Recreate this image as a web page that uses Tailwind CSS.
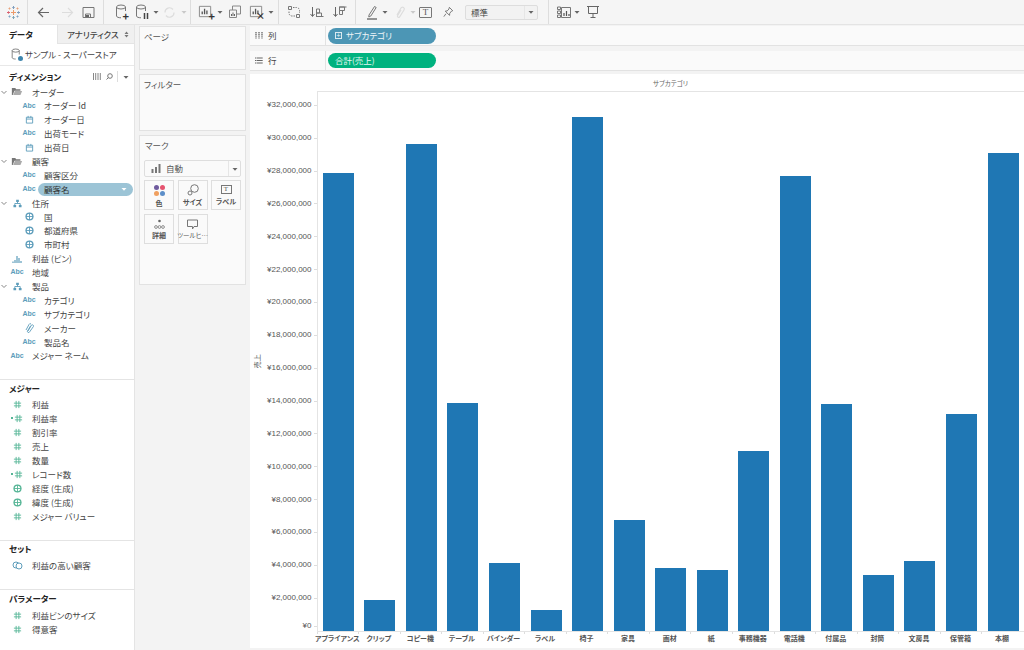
<!DOCTYPE html>
<html lang="ja">
<head>
  <meta charset="UTF-8">
  <title>Tableau - 売上</title>
  <script src="https://cdn.jsdelivr.net/npm/@tailwindcss/browser@4"></script>
</head>
<body class="w-[1024px] h-[650px] overflow-hidden bg-[#f3f3f3] text-[#444] text-[8.5px] [font-feature-settings:'palt'] font-['Noto_Sans_CJK_JP','Liberation_Sans',sans-serif]">
  <svg class="hidden">
    <symbol id="date" viewBox="0 0 10 10"><path d="M1.5 2.5h7v6.500h-7zM1.500 4.500h7M3.500 1v2M6.500 1v2" fill="none" stroke="#5d9dbb"/></symbol>
    <symbol id="globe" viewBox="0 0 10 10"><circle cx="5" cy="5" r="3.800" fill="none" stroke="#5d9dbb" stroke-width="1.500"/><path d="M1 5h8M5 1v8" stroke="#5d9dbb"/></symbol>
    <symbol id="globeg" viewBox="0 0 10 10"><circle cx="5" cy="5" r="3.800" fill="none" stroke="#56b596" stroke-width="1.500"/><path d="M1 5h8M5 1v8" stroke="#56b596"/></symbol>
    <symbol id="hash" viewBox="0 0 10 10"><path d="M3.500 1v8M6.500 1v8M1 3.500h8M1 6.500h8" fill="none" stroke="#56b596"/></symbol>
    <symbol id="folder" viewBox="0 0 14 10"><path d="M1 1h4l1 1.500h5V4H4L2 9H1z" fill="#777"/><path d="M4.500 4.500H13L11 9H2.500z" fill="#aaa"/></symbol>
    <symbol id="tree" viewBox="0 0 10 10"><path d="M3.500.8h3v2.400h-3zM.5 6.800h3v2.400h-3zM6.500 6.800h3v2.400h-3z" fill="#5d9dbb"/><path d="M5 3v2M2 7V5h6v2" fill="none" stroke="#5d9dbb"/></symbol>
    <symbol id="chev" viewBox="0 0 8 8"><path d="M1.500 3l2.500 2.500L6.500 3" fill="none" stroke="#888"/></symbol>
    <symbol id="caret" viewBox="0 0 6 6"><path d="M.5 2h5L3 4.800z" fill="#666"/></symbol>
    <symbol id="cyl" viewBox="0 0 14 16"><ellipse cx="6" cy="3" rx="4.500" ry="2" fill="none" stroke="#777"/><path d="M1.500 3v9c0 1 2 1.800 4.500 1.800M10.500 3v4" fill="none" stroke="#777"/></symbol>
    <symbol id="sheet" viewBox="0 0 16 16"><path d="M1.500 2.500h12v11h-12z" fill="none" stroke="#888"/><path d="M4.500 11V8M7 11V5M9.500 11V7" stroke="#555" stroke-width="1.400"/></symbol>
  </svg>

  <!-- toolbar -->
  <div class="h-[25px] flex items-center border-b border-[#e4e4e4] bg-[#f5f5f5]">
    <div class="w-[28px] h-full flex items-center justify-center border-r border-[#ddd]">
      <svg class="w-[13px] h-[13px]" viewBox="0 0 13 13"><path d="M6.500 4v5M4 6.500h5" stroke="#eb9a6a"/><path d="M6.500 0v3M5.300 1.500h2.400" stroke="#7d9cbc"/><path d="M6.500 10v3M5.300 11.500h2.400" stroke="#7aa3b5"/><path d="M0 6.500h3M1.500 5.300v2.400" stroke="#d9606f"/><path d="M10 6.500h3M11.500 5.300v2.400" stroke="#7d9cbc"/><path d="M2.500 1.500v2M1.500 2.500h2M10.500 1.500v2M9.500 2.500h2" stroke="#e8a27a"/><path d="M2.500 9.500v2M1.500 10.500h2M10.500 9.500v2M9.500 10.500h2" stroke="#7fa3c4"/></svg>
    </div>
    <div class="w-[76px] h-full flex items-center border-r border-[#ddd]">
      <svg class="ml-[9px] w-[13px] h-[13px]" viewBox="0 0 13 13"><path d="M12 6.500H1.500M6 2L1.500 6.500 6 11" fill="none" stroke="#666" stroke-width="1.200"/></svg>
      <svg class="ml-[11px] w-[13px] h-[13px]" viewBox="0 0 13 13"><path d="M1 6.500h10.500M7 2l4.500 4.500L7 11" fill="none" stroke="#ddd" stroke-width="1.200"/></svg>
      <svg class="ml-[8px] w-[13px] h-[13px]" viewBox="0 0 13 13"><path d="M1 1.500h11v10H1zM3.500 11.500V8h5v3.500" fill="none" stroke="#777"/><path d="M4 9h3v2H4z" fill="#666"/></svg>
    </div>
    <div class="w-[87px] h-full flex items-center border-r border-[#ddd]">
      <div class="relative ml-[11px] w-[14px] h-[16px]"><svg class="w-[14px] h-[16px]"><use href="#cyl"/></svg><span class="absolute right-0 bottom-0 text-[11px] leading-[8px] font-bold text-[#333]">+</span></div>
      <div class="relative ml-[6px] w-[14px] h-[16px]"><svg class="w-[14px] h-[16px]"><use href="#cyl"/></svg><svg class="absolute right-0 bottom-[1px] w-[6px] h-[6px]" viewBox="0 0 6 6"><path d="M1.500 0v6M4.500 0v6" stroke="#444" stroke-width="1.500"/></svg></div>
      <svg class="ml-[4px] w-[6px] h-[6px]"><use href="#caret"/></svg>
      <svg class="ml-[4px] w-[13px] h-[13px]" viewBox="0 0 13 13"><path d="M2 6.500a4.500 4.500 0 018-3M11 6.500a4.500 4.500 0 01-8 3" fill="none" stroke="#ddd" stroke-width="1.200"/></svg>
      <svg class="ml-[5px] w-[6px] h-[6px] opacity-30"><use href="#caret"/></svg>
    </div>
    <div class="w-[88px] h-full flex items-center border-r border-[#ddd]">
      <div class="relative ml-[7px] w-[15px] h-[16px]"><svg class="w-[15px] h-[15px]"><use href="#sheet"/></svg><span class="absolute -right-[2px] bottom-0 text-[11px] leading-[8px] font-bold text-[#333]">+</span></div>
      <svg class="ml-[4px] w-[6px] h-[6px]"><use href="#caret"/></svg>
      <svg class="ml-[5px] w-[14px] h-[14px]" viewBox="0 0 14 14"><path d="M4.500 1h8v8h-8z" fill="none" stroke="#888"/><path d="M1.500 5h7v7.500h-7z" fill="#f5f5f5" stroke="#888"/><path d="M3.500 11V9M5 11V7.500M6.500 11V9" stroke="#666"/></svg>
      <div class="relative ml-[7px] w-[15px] h-[16px]"><svg class="w-[15px] h-[15px]"><use href="#sheet"/></svg><span class="absolute -right-[1px] bottom-[1px] text-[9px] leading-[7px] font-bold text-[#333]">×</span></div>
      <svg class="ml-[4px] w-[6px] h-[6px]"><use href="#caret"/></svg>
    </div>
    <div class="w-[77px] h-full flex items-center border-r border-[#ddd]">
      <svg class="ml-[8px] w-[14px] h-[14px]" viewBox="0 0 14 14"><path d="M1.500 1.500h3v3h-3zM9.500 9.500h3v3h-3z" fill="none" stroke="#777"/><path d="M6 2.500h3.500a3 3 0 013 3V8M8 11H5a3 3 0 01-3-3V6" fill="none" stroke="#777" stroke-dasharray="1.500 1"/></svg>
      <svg class="ml-[9px] w-[14px] h-[14px]" viewBox="0 0 14 14"><path d="M2.500 2v9M.5 9l2 2.500L4.500 9" fill="none" stroke="#666"/><path d="M6 11.500h7.500M6.500 8h5v3.500h-5zM6.500 4h3v4h-3z" fill="none" stroke="#777"/></svg>
      <svg class="ml-[9px] w-[14px] h-[14px]" viewBox="0 0 14 14"><path d="M2.500 2v9M.5 9l2 2.500L4.500 9" fill="none" stroke="#666"/><path d="M6 2h7.500M6.500 2v3.500h5V2zM6.500 5.500v4h3v-4z" fill="none" stroke="#777"/></svg>
    </div>
    <div class="w-[193px] h-full flex items-center border-r border-[#ddd]">
      <svg class="ml-[9px] w-[14px] h-[15px]" viewBox="0 0 14 15"><path d="M4 10l5.500-8.500 1.700 1L5.800 11l-2 1z" fill="none" stroke="#777"/><path d="M2 14h10" stroke="#555" stroke-width="1.200"/></svg>
      <svg class="ml-[3px] w-[6px] h-[6px]"><use href="#caret"/></svg>
      <svg class="ml-[5px] w-[13px] h-[15px]" viewBox="0 0 13 15"><path d="M4 10l4-7a1.800 1.800 0 013 2L6.500 12a1.200 1.200 0 01-2-1.200L8 5" fill="none" stroke="#ddd" stroke-width="1.200"/></svg>
      <svg class="ml-[4px] w-[6px] h-[6px] opacity-30"><use href="#caret"/></svg>
      <span class="ml-[3px] w-[13px] h-[11px] border border-[#777] rounded-[1px] flex items-center justify-center font-['Liberation_Serif',serif] text-[9px] leading-none text-[#555]">T</span>
      <svg class="ml-[11px] w-[11px] h-[12px]" viewBox="0 0 13 13"><path d="M7.500 1l4 4-1.500.5-2 2.500-.3 2.500-5-5L5 5.200 7 3z" fill="none" stroke="#666"/><path d="M3.500 8.500L1 12" stroke="#666"/></svg>
      <div class="ml-[11px] w-[73px] h-[15px] flex items-center border border-[#ddd] rounded-[2px] bg-[#f2f2f2]">
        <span class="flex-1 pl-[5px] leading-none text-[#444]">標準</span>
        <span class="w-[13px] h-full flex items-center justify-center border-l border-[#e6e6e6]"><svg class="w-[6px] h-[6px]"><use href="#caret"/></svg></span>
      </div>
    </div>
    <div class="flex items-center h-full">
      <svg class="ml-[8px] w-[14px] h-[13px]" viewBox="0 0 14 13"><path d="M.5 1h3v2.500h-3zM.5 5h3v2.500h-3zM.5 9h3v2.500h-3zM4.500 1.500h9v10h-9z" fill="none" stroke="#777"/><path d="M7 10V7M9.500 10V5M12 10V8" stroke="#555" stroke-width="1.200"/></svg>
      <svg class="ml-[3px] w-[6px] h-[6px]"><use href="#caret"/></svg>
      <svg class="ml-[6px] w-[14px] h-[14px]" viewBox="0 0 14 14"><path d="M1 1.500h12M2.500 1.500v7h9v-7M7 8.500v4M4.500 12.500h5" fill="none" stroke="#666"/></svg>
    </div>
  </div>

  <div class="flex h-[625px]">
    <!-- data pane -->
    <div class="w-[135px] shrink-0 bg-white border-r border-[#e4e4e4]">
      <div class="h-[19px] flex">
        <div class="w-[57px] flex items-center pl-[9px] font-bold text-[#222]">データ</div>
        <div class="flex-1 flex items-center pl-[9px] bg-[#f0f0f0] border-b border-[#e4e4e4] border-l whitespace-nowrap"><span class="font-medium">アナリティクス</span><svg class="ml-auto mr-[5px] w-[5px] h-[7px]" viewBox="0 0 5 7"><path d="M.5 3l2-2.500 2 2.500zM.5 4l2 2.500 2-2.500z" fill="#777"/></svg></div>
      </div>
      <div class="h-[22px] flex items-center border-b border-[#e8e8e8] pl-[11px]">
        <div class="relative w-[11px] h-[13px]"><svg class="w-[11px] h-[13px]" viewBox="0 0 14 16"><ellipse cx="6" cy="3" rx="4.500" ry="2" fill="none" stroke="#666"/><path d="M1.500 3v9c0 1 2 1.800 4.500 1.800M10.500 3v5" fill="none" stroke="#666"/></svg><span class="absolute -right-[1px] bottom-0 w-[5px] h-[5px] rounded-full bg-[#3f86ad]"></span></div>
        <span class="ml-[3px]">サンプル - スーパーストア</span>
      </div>
      <div class="h-[17px] mt-[2px] flex items-center pl-[9px] pr-[5px]">
        <span class="font-bold text-[#222]">ディメンション</span>
        <svg class="ml-auto w-[8px] h-[7px]" viewBox="0 0 8 7"><path d="M.5 0v7M2.700 0v7M5 0v7M7.300 0v7" stroke="#888"/></svg>
        <svg class="ml-[5px] w-[7px] h-[7px]" viewBox="0 0 7 7"><circle cx="4" cy="3" r="2.300" fill="none" stroke="#777"/><path d="M2.500 4.500L.5 6.500" stroke="#777"/></svg>
        <span class="ml-[4px] w-px h-[11px] bg-[#ddd]"></span>
        <svg class="ml-[5px] w-[6px] h-[6px]"><use href="#caret"/></svg>
      </div>
      <div class="h-[294px]">
        <div class="h-[13.9px] flex items-center"><svg class="w-[8px] h-[8px]"><use href="#chev"/></svg><span class="w-[18px] flex justify-center"><svg class="w-[12px] h-[9px]"><use href="#folder"/></svg></span><span class="ml-[6px]">オーダー</span></div>
        <div class="h-[13.9px] flex items-center pl-[20px]"><span class="w-[18px] text-center font-['Liberation_Sans',sans-serif] font-bold text-[7px] text-[#5d9dbb]">Abc</span><span class="ml-[6px]">オーダー Id</span></div>
        <div class="h-[13.9px] flex items-center pl-[20px]"><span class="w-[18px] flex justify-center"><svg class="w-[9px] h-[9px]"><use href="#date"/></svg></span><span class="ml-[6px]">オーダー日</span></div>
        <div class="h-[13.9px] flex items-center pl-[20px]"><span class="w-[18px] text-center font-['Liberation_Sans',sans-serif] font-bold text-[7px] text-[#5d9dbb]">Abc</span><span class="ml-[6px]">出荷モード</span></div>
        <div class="h-[13.9px] flex items-center pl-[20px]"><span class="w-[18px] flex justify-center"><svg class="w-[9px] h-[9px]"><use href="#date"/></svg></span><span class="ml-[6px]">出荷日</span></div>
        <div class="h-[13.9px] flex items-center"><svg class="w-[8px] h-[8px]"><use href="#chev"/></svg><span class="w-[18px] flex justify-center"><svg class="w-[12px] h-[9px]"><use href="#folder"/></svg></span><span class="ml-[6px]">顧客</span></div>
        <div class="h-[13.9px] flex items-center pl-[20px]"><span class="w-[18px] text-center font-['Liberation_Sans',sans-serif] font-bold text-[7px] text-[#5d9dbb]">Abc</span><span class="ml-[6px]">顧客区分</span></div>
        <div class="h-[13.9px] flex items-center pl-[20px]"><span class="w-[18px] text-center font-['Liberation_Sans',sans-serif] font-bold text-[7px] text-[#5d9dbb]">Abc</span><span class="flex-1 h-[13px] mr-[1px] flex items-center justify-between pl-[6px] pr-[6px] rounded-full bg-[#9cc4d6] text-[#333]">顧客名<svg class="w-[6px] h-[6px]" viewBox="0 0 6 6"><path d="M.5 2h5L3 4.800z" fill="#fff"/></svg></span></div>
        <div class="h-[13.9px] flex items-center"><svg class="w-[8px] h-[8px]"><use href="#chev"/></svg><span class="w-[18px] flex justify-center"><svg class="w-[9px] h-[9px]"><use href="#tree"/></svg></span><span class="ml-[6px]">住所</span></div>
        <div class="h-[13.9px] flex items-center pl-[20px]"><span class="w-[18px] flex justify-center"><svg class="w-[9px] h-[9px]"><use href="#globe"/></svg></span><span class="ml-[6px]">国</span></div>
        <div class="h-[13.9px] flex items-center pl-[20px]"><span class="w-[18px] flex justify-center"><svg class="w-[9px] h-[9px]"><use href="#globe"/></svg></span><span class="ml-[6px]">都道府県</span></div>
        <div class="h-[13.9px] flex items-center pl-[20px]"><span class="w-[18px] flex justify-center"><svg class="w-[9px] h-[9px]"><use href="#globe"/></svg></span><span class="ml-[6px]">市町村</span></div>
        <div class="h-[13.9px] flex items-center pl-[8px]"><span class="w-[18px] flex justify-center"><svg class="w-[11px] h-[8px]" viewBox="0 0 11 8"><path d="M1 8V6.500M3 8V5M5 8V1M7 8V3M9 8V6" stroke="#5d9dbb" stroke-width="1.200"/></svg></span><span class="ml-[6px]">利益 (ビン)</span></div>
        <div class="h-[13.9px] flex items-center pl-[8px]"><span class="w-[18px] text-center font-['Liberation_Sans',sans-serif] font-bold text-[7px] text-[#5d9dbb]">Abc</span><span class="ml-[6px]">地域</span></div>
        <div class="h-[13.9px] flex items-center"><svg class="w-[8px] h-[8px]"><use href="#chev"/></svg><span class="w-[18px] flex justify-center"><svg class="w-[9px] h-[9px]"><use href="#tree"/></svg></span><span class="ml-[6px]">製品</span></div>
        <div class="h-[13.9px] flex items-center pl-[20px]"><span class="w-[18px] text-center font-['Liberation_Sans',sans-serif] font-bold text-[7px] text-[#5d9dbb]">Abc</span><span class="ml-[6px]">カテゴリ</span></div>
        <div class="h-[13.9px] flex items-center pl-[20px]"><span class="w-[18px] text-center font-['Liberation_Sans',sans-serif] font-bold text-[7px] text-[#5d9dbb]">Abc</span><span class="ml-[6px]">サブカテゴリ</span></div>
        <div class="h-[13.9px] flex items-center pl-[20px]"><span class="w-[18px] flex justify-center"><svg class="w-[9px] h-[10px]" viewBox="0 0 9 10"><path d="M3 8l3.500-6a1.300 1.300 0 012 1.400L4.500 9a1 1 0 01-2-1L5.500 3M1 7l3-5.500A1.300 1.300 0 016 1" fill="none" stroke="#5d9dbb" stroke-width=".9"/></svg></span><span class="ml-[6px]">メーカー</span></div>
        <div class="h-[13.9px] flex items-center pl-[20px]"><span class="w-[18px] text-center font-['Liberation_Sans',sans-serif] font-bold text-[7px] text-[#5d9dbb]">Abc</span><span class="ml-[6px]">製品名</span></div>
        <div class="h-[13.9px] flex items-center pl-[8px]"><span class="w-[18px] text-center font-['Liberation_Sans',sans-serif] font-bold text-[7px] text-[#5d9dbb]">Abc</span><span class="ml-[6px]">メジャー ネーム</span></div>
      </div>
      <div class="h-[161px] border-t border-[#e4e4e4] pt-[1px]">
        <div class="h-[14px] mb-[2px] flex items-center pl-[9px] font-bold text-[#222]">メジャー</div>
        <div class="h-[14px] flex items-center pl-[8px]"><span class="w-[18px] flex justify-center"><svg class="w-[9px] h-[9px]"><use href="#hash"/></svg></span><span class="ml-[6px]">利益</span></div>
        <div class="h-[14px] flex items-center pl-[8px]"><span class="w-[18px] flex justify-center items-center"><span class="w-[2px] h-[2px] mr-[1px] bg-[#56b596]"></span><svg class="w-[9px] h-[9px]"><use href="#hash"/></svg></span><span class="ml-[6px]">利益率</span></div>
        <div class="h-[14px] flex items-center pl-[8px]"><span class="w-[18px] flex justify-center"><svg class="w-[9px] h-[9px]"><use href="#hash"/></svg></span><span class="ml-[6px]">割引率</span></div>
        <div class="h-[14px] flex items-center pl-[8px]"><span class="w-[18px] flex justify-center"><svg class="w-[9px] h-[9px]"><use href="#hash"/></svg></span><span class="ml-[6px]">売上</span></div>
        <div class="h-[14px] flex items-center pl-[8px]"><span class="w-[18px] flex justify-center"><svg class="w-[9px] h-[9px]"><use href="#hash"/></svg></span><span class="ml-[6px]">数量</span></div>
        <div class="h-[14px] flex items-center pl-[8px]"><span class="w-[18px] flex justify-center items-center"><span class="w-[2px] h-[2px] mr-[1px] bg-[#56b596]"></span><svg class="w-[9px] h-[9px]"><use href="#hash"/></svg></span><span class="ml-[6px]">レコード数</span></div>
        <div class="h-[14px] flex items-center pl-[8px]"><span class="w-[18px] flex justify-center"><svg class="w-[9px] h-[9px]"><use href="#globeg"/></svg></span><span class="ml-[6px]">経度 (生成)</span></div>
        <div class="h-[14px] flex items-center pl-[8px]"><span class="w-[18px] flex justify-center"><svg class="w-[9px] h-[9px]"><use href="#globeg"/></svg></span><span class="ml-[6px]">緯度 (生成)</span></div>
        <div class="h-[14px] flex items-center pl-[8px]"><span class="w-[18px] flex justify-center"><svg class="w-[9px] h-[9px]"><use href="#hash"/></svg></span><span class="ml-[6px]">メジャー バリュー</span></div>
      </div>
      <div class="h-[49px] border-t border-[#e4e4e4]">
        <div class="h-[14px] mb-[3px] flex items-center pl-[9px] font-bold text-[#222]">セット</div>
        <div class="h-[14px] flex items-center pl-[8px]"><span class="w-[18px] flex justify-center"><svg class="w-[11px] h-[9px]" viewBox="0 0 11 9"><circle cx="4" cy="4" r="3" fill="none" stroke="#5d9dbb"/><circle cx="7" cy="5" r="3" fill="#fff" stroke="#5d9dbb"/></svg></span><span class="ml-[6px]">利益の高い顧客</span></div>
      </div>
      <div class="border-t border-[#e4e4e4] pt-[1px]">
        <div class="h-[14px] mb-[3px] flex items-center pl-[9px] font-bold text-[#222]">パラメーター</div>
        <div class="h-[14px] flex items-center pl-[8px]"><span class="w-[18px] flex justify-center"><svg class="w-[9px] h-[9px]"><use href="#hash"/></svg></span><span class="ml-[6px]">利益ビンのサイズ</span></div>
        <div class="h-[14px] flex items-center pl-[8px]"><span class="w-[18px] flex justify-center"><svg class="w-[9px] h-[9px]"><use href="#hash"/></svg></span><span class="ml-[6px]">得意客</span></div>
      </div>
    </div>

    <!-- shelves: pages / filters / marks -->
    <div class="w-[115px] shrink-0 pt-[1px] pl-[4px] pr-[4px] flex flex-col gap-[4px]">
      <div class="h-[44px] bg-[#fafafa] border border-[#e2e2e2] pl-[4px] pt-[3px] text-[#555]">ページ</div>
      <div class="h-[57px] bg-[#fafafa] border border-[#e2e2e2] pl-[4px] pt-[3px] text-[#555]">フィルター</div>
      <div class="h-[150px] bg-[#fafafa] border border-[#e2e2e2] pl-[4px] pt-[3px] text-[#555]">
        <div class="pl-[1px] h-[16px]">マーク</div>
        <div class="mt-[5px] w-[97px] h-[17px] flex items-center bg-[#fafafa] border border-[#dedede] rounded-[2px]">
          <svg class="ml-[6px] w-[11px] h-[9px]" viewBox="0 0 11 9"><path d="M1.500 9V5M5 9V3M8.500 9V0" stroke="#777" stroke-width="2"/></svg>
          <span class="ml-[4px]">自動</span>
          <span class="ml-auto w-[12px] h-full flex items-center justify-center border-l border-[#e6e6e6]"><svg class="w-[6px] h-[6px]"><use href="#caret"/></svg></span>
        </div>
        <div class="mt-[3px] grid grid-cols-[30px_30px_30px] gap-x-[3.500px] gap-y-[4px]">
          <div class="h-[30px] bg-[#fafafa] border border-[#dedede] flex flex-col items-center pt-[4px]">
            <div class="grid grid-cols-2 gap-[1px]"><span class="w-[5px] h-[5px] rounded-full bg-[#6f5b9e]"></span><span class="w-[5px] h-[5px] rounded-full bg-[#e5536f]"></span><span class="w-[5px] h-[5px] rounded-full bg-[#f0a060]"></span><span class="w-[5px] h-[5px] rounded-full bg-[#5d8fc9]"></span></div>
            <span class="text-[7px] leading-[10px] font-bold mt-[2px]">色</span>
          </div>
          <div class="h-[30px] bg-[#fafafa] border border-[#dedede] flex flex-col items-center pt-[3px]">
            <svg class="w-[12px] h-[12px]" viewBox="0 0 12 12"><circle cx="7.500" cy="4.500" r="3.800" fill="#fafafa" stroke="#777"/><circle cx="3" cy="9" r="2" fill="#fafafa" stroke="#777"/></svg>
            <span class="text-[7px] leading-[10px] font-bold mt-[1px]">サイズ</span>
          </div>
          <div class="h-[30px] bg-[#fafafa] border border-[#dedede] flex flex-col items-center pt-[4px]">
            <span class="w-[11px] h-[9px] border border-[#777] flex items-center justify-center font-['Liberation_Serif',serif] text-[7px] leading-none">T</span>
            <span class="text-[7px] leading-[10px] font-bold mt-[2px]">ラベル</span>
          </div>
          <div class="h-[30px] bg-[#fafafa] border border-[#dedede] flex flex-col items-center pt-[4px]">
            <svg class="w-[11px] h-[10px]" viewBox="0 0 11 10"><circle cx="5.500" cy="2" r="1.300" fill="#666"/><circle cx="2" cy="8" r="1.400" fill="none" stroke="#777" stroke-width=".8"/><circle cx="5.500" cy="8" r="1.400" fill="none" stroke="#777" stroke-width=".8"/><circle cx="9" cy="8" r="1.400" fill="none" stroke="#777" stroke-width=".8"/></svg>
            <span class="text-[7px] leading-[10px] font-bold mt-[1px]">詳細</span>
          </div>
          <div class="h-[30px] bg-[#fafafa] border border-[#dedede] flex flex-col items-center pt-[4px]">
            <svg class="w-[11px] h-[11px]" viewBox="0 0 11 11"><path d="M.5 1h10v6.500H7L5.500 10V7.500H.5z" fill="none" stroke="#777"/></svg>
            <span class="text-[6.500px] leading-[10px] whitespace-nowrap">ツールヒ…</span>
          </div>
        </div>
      </div>
    </div>

    <!-- worksheet -->
    <div class="w-[774px] shrink-0 pt-[1px]">
      <div class="h-[20px] flex items-center bg-[#fafafa] border-b border-[#e2e2e2]">
        <div class="w-[76px] h-full flex items-center border-r border-[#e2e2e2] pl-[5px]"><svg class="w-[8px] h-[7px]" viewBox="0 0 8 7"><path d="M1 0v7M4 0v7M7 0v7" stroke="#666" stroke-width="1.300" stroke-dasharray="1.200 .6"/></svg><span class="ml-[5px]">列</span></div>
        <div class="ml-[2px] w-[108px] h-[16px] flex items-center rounded-full bg-[#4c96b5] pl-[7px] text-white/90">
          <span class="w-[7px] h-[7px] border border-white/80 flex items-center justify-center text-[7px] leading-none">+</span><span class="ml-[4px]">サブカテゴリ</span>
        </div>
      </div>
      <div class="mt-[5px] h-[20px] flex items-center bg-[#fafafa] border-b border-[#e2e2e2]">
        <div class="w-[76px] h-full flex items-center border-r border-[#e2e2e2] pl-[5px]"><svg class="w-[8px] h-[7px]" viewBox="0 0 8 7"><path d="M0 1h8M0 3.500h8M0 6h8" stroke="#666" stroke-width="1.100" stroke-dasharray="1.200 .5 6"/></svg><span class="ml-[5px]">行</span></div>
        <div class="ml-[2px] w-[108px] h-[15px] flex items-center rounded-full bg-[#00b27f] pl-[7px] text-white/90">合計(売上)</div>
      </div>
      <div class="mt-[3px] h-[574px] bg-white">
        <div class="h-[17px] flex items-center ml-[67px] pt-[2px] w-[707px] justify-center text-[6.500px] text-[#666]">サブカテゴリ</div>
        <div class="flex">
          <div class="w-[14px] h-[540px] flex items-center justify-center"><span class="rotate-[-90deg] text-[7px] text-[#555]">売上</span></div>
          <div class="w-[52.500px] -mt-[2px] font-['Liberation_Sans',sans-serif] text-[8px] text-[#555] text-right">
            <div class="h-[32.850px] flex items-center justify-end">¥32,000,000<span class="ml-[2px] w-[3px] h-px bg-[#ddd]"></span></div>
            <div class="h-[32.850px] flex items-center justify-end">¥30,000,000<span class="ml-[2px] w-[3px] h-px bg-[#ddd]"></span></div>
            <div class="h-[32.850px] flex items-center justify-end">¥28,000,000<span class="ml-[2px] w-[3px] h-px bg-[#ddd]"></span></div>
            <div class="h-[32.850px] flex items-center justify-end">¥26,000,000<span class="ml-[2px] w-[3px] h-px bg-[#ddd]"></span></div>
            <div class="h-[32.850px] flex items-center justify-end">¥24,000,000<span class="ml-[2px] w-[3px] h-px bg-[#ddd]"></span></div>
            <div class="h-[32.850px] flex items-center justify-end">¥22,000,000<span class="ml-[2px] w-[3px] h-px bg-[#ddd]"></span></div>
            <div class="h-[32.850px] flex items-center justify-end">¥20,000,000<span class="ml-[2px] w-[3px] h-px bg-[#ddd]"></span></div>
            <div class="h-[32.850px] flex items-center justify-end">¥18,000,000<span class="ml-[2px] w-[3px] h-px bg-[#ddd]"></span></div>
            <div class="h-[32.850px] flex items-center justify-end">¥16,000,000<span class="ml-[2px] w-[3px] h-px bg-[#ddd]"></span></div>
            <div class="h-[32.850px] flex items-center justify-end">¥14,000,000<span class="ml-[2px] w-[3px] h-px bg-[#ddd]"></span></div>
            <div class="h-[32.850px] flex items-center justify-end">¥12,000,000<span class="ml-[2px] w-[3px] h-px bg-[#ddd]"></span></div>
            <div class="h-[32.850px] flex items-center justify-end">¥10,000,000<span class="ml-[2px] w-[3px] h-px bg-[#ddd]"></span></div>
            <div class="h-[32.850px] flex items-center justify-end">¥8,000,000<span class="ml-[2px] w-[3px] h-px bg-[#ddd]"></span></div>
            <div class="h-[32.850px] flex items-center justify-end">¥6,000,000<span class="ml-[2px] w-[3px] h-px bg-[#ddd]"></span></div>
            <div class="h-[32.850px] flex items-center justify-end">¥4,000,000<span class="ml-[2px] w-[3px] h-px bg-[#ddd]"></span></div>
            <div class="h-[32.850px] flex items-center justify-end">¥2,000,000<span class="ml-[2px] w-[3px] h-px bg-[#ddd]"></span></div>
            <div class="h-[23px] flex items-center justify-end">¥0<span class="ml-[2px] w-[3px] h-px bg-[#ddd]"></span></div>
          </div>
          <div class="w-[707.500px]">
            <div class="h-[541px] flex items-end border-l border-t border-b border-[#e4e4e4]">
              <div class="w-[41.550px] flex justify-center"><div class="w-[31px] h-[458px] bg-[#1f77b4]"></div></div>
              <div class="w-[41.550px] flex justify-center"><div class="w-[31px] h-[31px] bg-[#1f77b4]"></div></div>
              <div class="w-[41.550px] flex justify-center"><div class="w-[31px] h-[487px] bg-[#1f77b4]"></div></div>
              <div class="w-[41.550px] flex justify-center"><div class="w-[31px] h-[228px] bg-[#1f77b4]"></div></div>
              <div class="w-[41.550px] flex justify-center"><div class="w-[31px] h-[68px] bg-[#1f77b4]"></div></div>
              <div class="w-[41.550px] flex justify-center"><div class="w-[31px] h-[21px] bg-[#1f77b4]"></div></div>
              <div class="w-[41.550px] flex justify-center"><div class="w-[31px] h-[514px] bg-[#1f77b4]"></div></div>
              <div class="w-[41.550px] flex justify-center"><div class="w-[31px] h-[111px] bg-[#1f77b4]"></div></div>
              <div class="w-[41.550px] flex justify-center"><div class="w-[31px] h-[63px] bg-[#1f77b4]"></div></div>
              <div class="w-[41.550px] flex justify-center"><div class="w-[31px] h-[61px] bg-[#1f77b4]"></div></div>
              <div class="w-[41.550px] flex justify-center"><div class="w-[31px] h-[180px] bg-[#1f77b4]"></div></div>
              <div class="w-[41.550px] flex justify-center"><div class="w-[31px] h-[455px] bg-[#1f77b4]"></div></div>
              <div class="w-[41.550px] flex justify-center"><div class="w-[31px] h-[227px] bg-[#1f77b4]"></div></div>
              <div class="w-[41.550px] flex justify-center"><div class="w-[31px] h-[56px] bg-[#1f77b4]"></div></div>
              <div class="w-[41.550px] flex justify-center"><div class="w-[31px] h-[70px] bg-[#1f77b4]"></div></div>
              <div class="w-[41.550px] flex justify-center"><div class="w-[31px] h-[217px] bg-[#1f77b4]"></div></div>
              <div class="w-[41.550px] flex justify-center"><div class="w-[31px] h-[478px] bg-[#1f77b4]"></div></div>
            </div>
            <div class="flex h-[16px] text-[7px] font-bold text-[#555] text-center">
              <div class="relative w-[41.550px] whitespace-nowrap leading-[13px] flex justify-center"><span class="absolute left-0 top-0 w-px h-[2px] bg-[#ddd]"></span>アプライアンス</div>
              <div class="relative w-[41.550px] whitespace-nowrap leading-[13px] flex justify-center"><span class="absolute left-0 top-0 w-px h-[2px] bg-[#ddd]"></span>クリップ</div>
              <div class="relative w-[41.550px] whitespace-nowrap leading-[13px] flex justify-center"><span class="absolute left-0 top-0 w-px h-[2px] bg-[#ddd]"></span>コピー機</div>
              <div class="relative w-[41.550px] whitespace-nowrap leading-[13px] flex justify-center"><span class="absolute left-0 top-0 w-px h-[2px] bg-[#ddd]"></span>テーブル</div>
              <div class="relative w-[41.550px] whitespace-nowrap leading-[13px] flex justify-center"><span class="absolute left-0 top-0 w-px h-[2px] bg-[#ddd]"></span>バインダー</div>
              <div class="relative w-[41.550px] whitespace-nowrap leading-[13px] flex justify-center"><span class="absolute left-0 top-0 w-px h-[2px] bg-[#ddd]"></span>ラベル</div>
              <div class="relative w-[41.550px] whitespace-nowrap leading-[13px] flex justify-center"><span class="absolute left-0 top-0 w-px h-[2px] bg-[#ddd]"></span>椅子</div>
              <div class="relative w-[41.550px] whitespace-nowrap leading-[13px] flex justify-center"><span class="absolute left-0 top-0 w-px h-[2px] bg-[#ddd]"></span>家具</div>
              <div class="relative w-[41.550px] whitespace-nowrap leading-[13px] flex justify-center"><span class="absolute left-0 top-0 w-px h-[2px] bg-[#ddd]"></span>画材</div>
              <div class="relative w-[41.550px] whitespace-nowrap leading-[13px] flex justify-center"><span class="absolute left-0 top-0 w-px h-[2px] bg-[#ddd]"></span>紙</div>
              <div class="relative w-[41.550px] whitespace-nowrap leading-[13px] flex justify-center"><span class="absolute left-0 top-0 w-px h-[2px] bg-[#ddd]"></span>事務機器</div>
              <div class="relative w-[41.550px] whitespace-nowrap leading-[13px] flex justify-center"><span class="absolute left-0 top-0 w-px h-[2px] bg-[#ddd]"></span>電話機</div>
              <div class="relative w-[41.550px] whitespace-nowrap leading-[13px] flex justify-center"><span class="absolute left-0 top-0 w-px h-[2px] bg-[#ddd]"></span>付属品</div>
              <div class="relative w-[41.550px] whitespace-nowrap leading-[13px] flex justify-center"><span class="absolute left-0 top-0 w-px h-[2px] bg-[#ddd]"></span>封筒</div>
              <div class="relative w-[41.550px] whitespace-nowrap leading-[13px] flex justify-center"><span class="absolute left-0 top-0 w-px h-[2px] bg-[#ddd]"></span>文房具</div>
              <div class="relative w-[41.550px] whitespace-nowrap leading-[13px] flex justify-center"><span class="absolute left-0 top-0 w-px h-[2px] bg-[#ddd]"></span>保管箱</div>
              <div class="relative w-[41.550px] whitespace-nowrap leading-[13px] flex justify-center"><span class="absolute left-0 top-0 w-px h-[2px] bg-[#ddd]"></span>本棚</div>
            </div>
          </div>
        </div>
      </div>
    </div>
  </div>
</body>
</html>
